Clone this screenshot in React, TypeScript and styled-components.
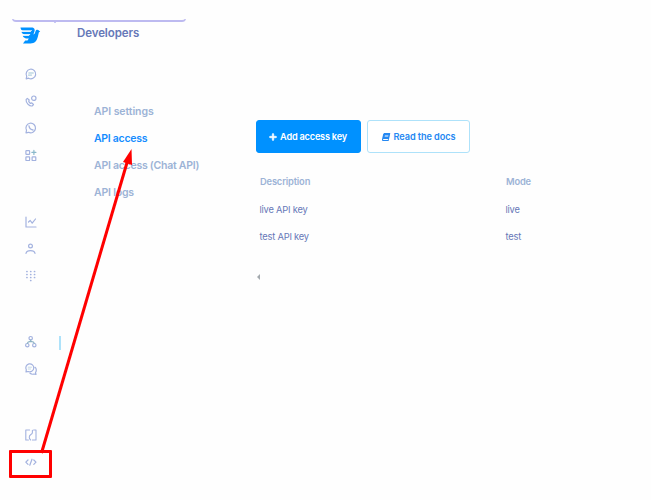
import { ReactNode } from "react";
import styled, { createGlobalStyle } from "styled-components";
import { FaBook, FaPlus } from "react-icons/fa";

const blue = "#0091ff";
const lightBlue = "#aee2fa";
const muted = "#9cb3d6";
const text = "#6678b8";
const iconColor = "#a3b2df";
const red = "#ff0000";

const GlobalStyle = createGlobalStyle`
  * {
    box-sizing: border-box;
  }
  body {
    margin: 0;
    background: #fefefe;
    font-family: Inter, "Liberation Sans", sans-serif;
  }
`;

const Page = styled.div`
  position: relative;
  display: flex;
  width: 651px;
  height: 500px;
  overflow: hidden;
`;

const Sidebar = styled.aside`
  width: 61px;
  padding-top: 26px;
  flex-shrink: 0;
`;

const Logo = styled.svg`
  display: block;
  width: 21px;
  height: 18px;
  margin: 0 0 16px 20px;
`;

const IconGroup = styled.div<{ gap?: number }>`
  display: flex;
  flex-direction: column;
  margin-top: ${(props) => props.gap || 0}px;
`;

const IconButton = styled.a<{ marked?: boolean }>`
  display: flex;
  align-items: center;
  justify-content: space-between;
  height: 27px;
  padding-left: 25px;

  &::after {
    content: "";
    display: ${(props) => (props.marked ? "block" : "none")};
    width: 2px;
    height: 14px;
    margin-top: 2px;
    background: ${lightBlue};
  }

  svg {
    width: 12px;
    height: 12px;
    overflow: visible;
    fill: none;
    stroke: ${iconColor};
    stroke-width: 1.2;
    stroke-linecap: round;
    stroke-linejoin: round;
  }
`;

const SubNav = styled.nav`
  width: 195px;
  padding: 25px 0 0 16px;
  flex-shrink: 0;
`;

const Title = styled.h1`
  margin: 0 0 57px;
  color: ${text};
  font-size: 11.5px;
  font-weight: 600;
  line-height: 16px;
  letter-spacing: -0.1px;
`;

const NavLink = styled.a<{ active?: boolean; spacing?: number }>`
  display: block;
  padding-left: 17px;
  color: ${(props) => (props.active ? "#158cff" : muted)};
  font-size: 10.5px;
  font-weight: 600;
  line-height: 27px;
  white-space: nowrap;
  letter-spacing: ${(props) => props.spacing || 0}px;
`;

const Content = styled.main`
  flex: 1;
  padding-top: 120px;
`;

const Actions = styled.div`
  display: flex;
  gap: 6px;
`;

const Button = styled.button<{ primary?: boolean }>`
  display: flex;
  align-items: center;
  justify-content: center;
  gap: ${(props) => (props.primary ? 3 : 4)}px;
  width: ${(props) => (props.primary ? 105 : 103)}px;
  height: 33px;
  padding: 0;
  border: 1px solid ${(props) => (props.primary ? blue : lightBlue)};
  border-radius: 3px;
  background: ${(props) => (props.primary ? blue : "#fff")};
  color: ${(props) => (props.primary ? "#fff" : "#2588f2")};
  font-family: inherit;
  font-size: 9.2px;
  font-weight: 600;
  letter-spacing: ${(props) => (props.primary ? -0.22 : -0.1)}px;
  white-space: nowrap;
`;

const AddIcon = styled(FaPlus)`
  margin-left: -1px;
  stroke: currentColor;
  stroke-width: 36;
`;

const DocsIcon = styled(FaBook)`
  transform: skewX(-12deg);
`;

const Table = styled.div`
  margin-top: 15px;
`;

const Row = styled.div<{ header?: boolean }>`
  display: grid;
  grid-template-columns: 246px 1fr;
  height: ${(props) => (props.header ? 28 : 27)}px;
  padding-left: ${(props) => (props.header ? 4 : 3.5)}px;
  color: ${(props) => (props.header ? muted : text)};
  font-size: 9.3px;
  font-weight: ${(props) => (props.header ? 600 : 400)};
  line-height: 27px;
  letter-spacing: ${(props) => (props.header ? -0.15 : -0.2)}px;
`;

const Previous = styled.div`
  width: 0;
  height: 0;
  margin: 24px 0 0 1px;
  border: 3px solid transparent;
  border-left-width: 0;
  border-right-color: #a3a9ae;
`;

const BrowserEdge = styled.div`
  position: absolute;
  top: 14px;
  left: 12px;
  width: 174px;
  height: 8px;
  border: 1.5px solid #bdbaf0;
  border-bottom-width: 2px;
  border-top: 0;
  border-radius: 0 0 4px 4px;
  clip-path: inset(5px 0 0 0);
`;

const BrowserTick = styled.div`
  position: absolute;
  top: 22px;
  left: 54px;
  width: 2px;
  height: 1px;
  background: #c8c8f4;
`;

const Highlight = styled.div`
  position: absolute;
  top: 450px;
  left: 9px;
  width: 43px;
  height: 28px;
  border: 3px solid ${red};
  border-radius: 1px;
`;

const Arrow = styled.svg`
  position: absolute;
  inset: 0;
  width: 651px;
  height: 500px;
  pointer-events: none;
`;

const Icon = ({ children }: { children: ReactNode }) => (
  <svg viewBox="0 0 12 12">{children}</svg>
);

const App = () => {
  return (
    <>
      <GlobalStyle />
      <Page>
        <Sidebar>
          <Logo viewBox="0 0 21 18">
            <path
              fill={blue}
              d="M.5 1.5H11.3C14.3 1.5 15.3 3.6 14.3 6L13.4 8.6C14.9 8.1 15.1 6.4 15.5 5.3C16 3.6 18 3.4 18.9 4.6L20.2 5.8L18.9 6.3L17.9 10.6C16.8 15.2 14.7 17.5 10.5 17.5H3L5.2 14.4H7.5L8.8 12.6C5.2 12.8 3.4 11.6 2.7 9.7H8.7L10 8.3H4.5C2.7 8.3 1.8 7 1.5 5.7H10.5L11.4 4.5H3C1.5 4.5.7 3.3.5 1.5Z"
            />
            <path
              fill="none"
              stroke="#fff"
              strokeWidth=".9"
              d="M1 5.1H10.9L11.6 4.3M2 9H9.2L10 8.1"
            />
          </Logo>
          <IconGroup>
            <IconButton>
              <Icon>
                <path d="M1.2 10.8L1.7 8.3A4.8 4.8 0 1 1 3.6 10.2Z" />
                <path stroke="#9fc5d5" strokeWidth="1" d="M3.8 5H8.3M3.5 7.1H6.5" />
              </Icon>
            </IconButton>
            <IconButton>
              <Icon>
                <circle cx="8.8" cy="3.2" r="2.2" />
                <path d="M2.3 3.4L1.1 4.6Q.8 7.2 3 9.3Q5.3 11.4 7.3 10.9L8.5 9.5L6.8 7.9L5.6 8.4Q4.3 7.6 3.7 6.2L4.2 5Z" />
              </Icon>
            </IconButton>
            <IconButton>
              <Icon>
                <path d="M1 10.8L1.5 8.3A4.8 4.8 0 1 1 3.6 10.3Z" />
                <path strokeWidth="1.3" d="M4 4Q4.5 7.5 8 8" />
              </Icon>
            </IconButton>
            <IconButton>
              <Icon>
                <rect x=".9" y="1.6" width="3.7" height="3.7" rx=".6" />
                <rect x=".9" y="7.8" width="3.7" height="3.7" rx=".6" />
                <rect x="7.1" y="7.8" width="3.7" height="3.7" rx=".6" />
                <path stroke="#8bb9cb" d="M8.9 1.4V5.4M6.9 3.4H10.9" />
              </Icon>
            </IconButton>
          </IconGroup>
          <IconGroup gap={40}>
            <IconButton>
              <Icon>
                <path d="M1 1V11H11M3.5 6L5.2 4.5L7.2 7.2L10.5 3" />
              </Icon>
            </IconButton>
            <IconButton>
              <Icon>
                <circle cx="5.5" cy="3" r="1.9" />
                <path d="M1 10.4C1.8 6.7 9.2 6.7 10 10.4" />
              </Icon>
            </IconButton>
            <IconButton>
              <Icon>
                <path
                  strokeWidth="1.7"
                  d="M1.9 1.5H2M5.7 1.5H5.8M9.5 1.5H9.6M1.9 4.5H2M5.7 4.5H5.8M9.5 4.5H9.6M1.9 7.5H2M5.7 7.5H5.8M9.5 7.5H9.6M5.7 10.5H5.8"
                />
              </Icon>
            </IconButton>
          </IconGroup>
          <IconGroup gap={39}>
            <IconButton marked>
              <Icon>
                <circle cx="5.7" cy="2.2" r="1.7" />
                <circle cx="2.3" cy="9.2" r="1.7" />
                <circle cx="9.3" cy="9.2" r="1.7" />
                <path stroke="#8bb2c2" d="M5.7 4V5.5M2.4 7.3L3.2 6L5.7 5.3L8.4 6L9.2 7.3" />
              </Icon>
            </IconButton>
            <IconButton>
              <Icon>
                <path d="M1 8.8L1.3 6.8A4 4 0 1 1 3.2 8.5ZM10 4.3C11.6 5.5 11.7 8 10.5 9.5L11 11.3L8.8 11Q6.7 11.7 5 10.3" />
                <path stroke="#b9d0e0" strokeWidth=".8" d="M3.2 4.2H6.5M3.2 6H5.5" />
              </Icon>
            </IconButton>
          </IconGroup>
          <IconGroup gap={39}>
            <IconButton>
              <Icon>
                <path
                  strokeWidth="1.1"
                  d="M4.6 1H.8V11H3.4M7.4 11H11V1H8.6M7.4 1.2V3.6Q7.4 4.8 5.9 5.5Q4.3 6.4 4.3 8V8.5Q4.3 9.8 5.6 11"
                />
              </Icon>
            </IconButton>
            <IconButton>
              <Icon>
                <path d="M3 4L.8 6.2L3 8.4M8.8 4L11 6.2L8.8 8.4M7 3.2L4.8 9.2" />
              </Icon>
            </IconButton>
          </IconGroup>
        </Sidebar>
        <SubNav>
          <Title>Developers</Title>
          <NavLink spacing={-0.08}>API settings</NavLink>
          <NavLink active spacing={-0.28}>
            API access
          </NavLink>
          <NavLink spacing={-0.25}>API access (Chat API)</NavLink>
          <NavLink spacing={-0.2}>API logs</NavLink>
        </SubNav>
        <Content>
          <Actions>
            <Button primary>
              <AddIcon size={8} />
              Add access key
            </Button>
            <Button>
              <DocsIcon size={8} />
              Read the docs
            </Button>
          </Actions>
          <Table>
            <Row header>
              <span>Description</span>
              <span>Mode</span>
            </Row>
            <Row>
              <span>live API key</span>
              <span>live</span>
            </Row>
            <Row>
              <span>test API key</span>
              <span>test</span>
            </Row>
          </Table>
          <Previous />
        </Content>
        <BrowserEdge />
        <BrowserTick />
        <Highlight />
        <Arrow viewBox="0 0 651 500">
          <path d="M41.5 453L127.5 161" stroke={red} strokeWidth="3" />
          <path d="M131.5 149L132 165L123 162Z" fill={red} />
        </Arrow>
      </Page>
    </>
  );
};

export default App;
